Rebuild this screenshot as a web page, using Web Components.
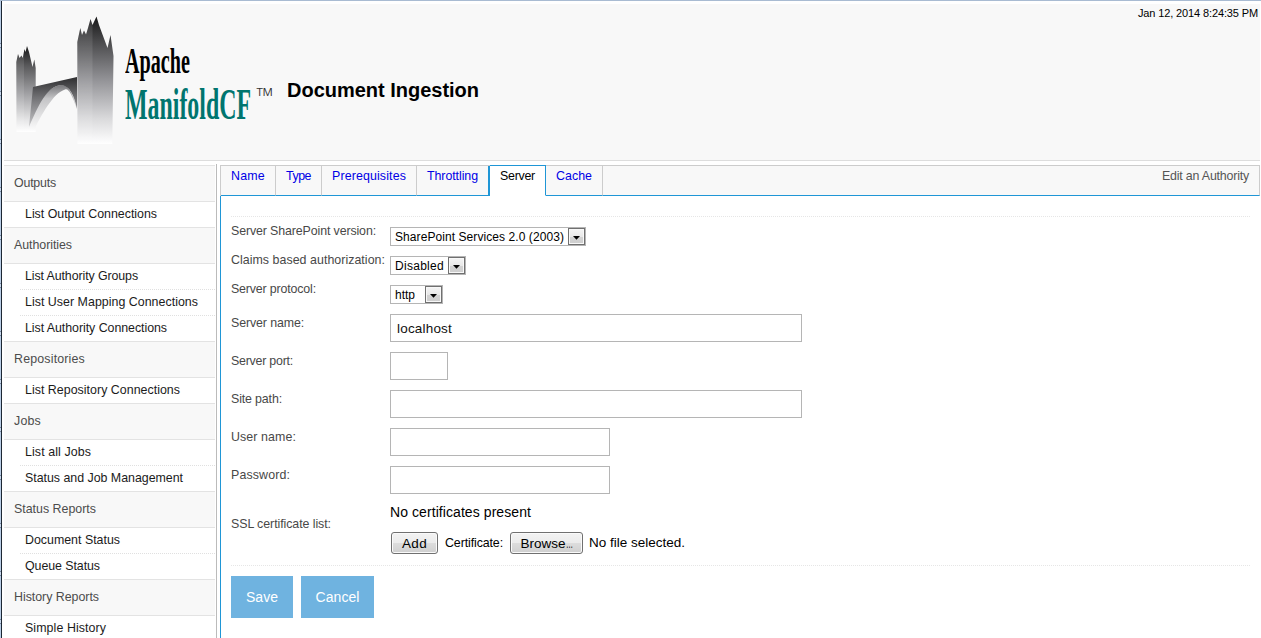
<!DOCTYPE html>
<html lang="en">
<head>
<meta charset="utf-8">
<title>Document Ingestion</title>
<style>
html, body { margin: 0; height: 638px; overflow: hidden; background: #fff; font: 12.4px/14px "Liberation Sans", Arial, sans-serif; }
</style>
</head>
<body>
<mcf-app></mcf-app>
<script>
class McfBase extends HTMLElement {
  constructor() {
    super();
    this.attachShadow({ mode: 'open' }).innerHTML = this.view();
  }
  view() { return '<slot></slot>'; }
}
const define = (name, cls) => customElements.define(name, cls);

/* Single line of text, tracked so that it fills the given advance width. */
define('fit-text', class extends McfBase {
  view() { return '<style>:host{display:inline-block;white-space:nowrap;flex:none}</style><span><slot></slot></span>'; }
  connectedCallback() {
    const w = parseFloat(this.getAttribute('w'));
    const s = this.shadowRoot.querySelector('span');
    s.style.letterSpacing = '0';
    const natural = s.getBoundingClientRect().width;
    s.style.letterSpacing = ((w - natural) / this.textContent.length) + 'px';
    this.style.width = w + 'px';
  }
});

/* Single line of text, condensed horizontally to the given width. */
define('condensed-text', class extends McfBase {
  view() { return '<style>:host{display:block;white-space:nowrap}span{display:inline-block;transform-origin:0 0}</style><span><slot></slot></span>'; }
  connectedCallback() {
    const w = parseFloat(this.getAttribute('w'));
    const s = this.shadowRoot.querySelector('span');
    s.style.transform = `scaleX(${w / s.getBoundingClientRect().width})`;
    this.style.width = w + 'px';
  }
});

define('mcf-logo', class extends McfBase {
  view() { return `<style>
    :host{display:flex;width:276px;height:156px;font-family:"Liberation Serif","Times New Roman",serif;font-weight:bold}
    svg{display:block;flex:none}
    .names{padding:38px 0 0 5px;width:131px;box-sizing:border-box;flex:none}
    .one{font-size:35px;line-height:40px;color:#000}
    .two{font-size:44px;line-height:46px;color:#00756f}
    .tm{font:11.5px/14px "Open Sans",sans-serif;color:#333;margin:81px 0 0 5.500px}
  </style>
  <svg width="116" height="156" viewBox="4 4 116 156">
    <defs>
      <linearGradient id="a" gradientUnits="userSpaceOnUse" x1="0" y1="47" x2="0" y2="132">
        <stop offset="0" stop-color="#1c1c1d"/><stop offset=".22" stop-color="#59595b"/><stop offset=".55" stop-color="#a1a1a4"/><stop offset=".86" stop-color="#e6e6e7"/><stop offset="1" stop-color="#fff"/>
      </linearGradient>
      <linearGradient id="b" gradientUnits="userSpaceOnUse" x1="0" y1="16" x2="0" y2="144">
        <stop offset="0" stop-color="#161617"/><stop offset=".2" stop-color="#4a4a4c"/><stop offset=".5" stop-color="#939397"/><stop offset=".8" stop-color="#d9d9db"/><stop offset="1" stop-color="#fff"/>
      </linearGradient>
      <linearGradient id="c" gradientUnits="userSpaceOnUse" x1="0" y1="78" x2="0" y2="126">
        <stop offset="0" stop-color="#303032"/><stop offset=".4" stop-color="#707073"/><stop offset="1" stop-color="#c4c4c6"/>
      </linearGradient>
      <linearGradient id="d" gradientUnits="userSpaceOnUse" x1="0" y1="85" x2="0" y2="130">
        <stop offset="0" stop-color="#77777a"/><stop offset=".3" stop-color="#c4c4c6"/><stop offset="1" stop-color="#fafafa"/>
      </linearGradient>
    </defs>
    <path fill="url(#a)" d="M16.500 132L16.300 62L18 54L19.500 58L21.500 55.500L22.700 58L24.500 49L25.500 52L27 46L29 52L32.500 67L34.300 59.500L35.700 68V132Z"/>
    <path fill="#fff" opacity=".1" d="M16.300 62L18 54L19.500 58L21.500 55.500L22.700 58L24 52V132H16.500Z"/>
    <path fill="url(#d)" d="M29 127C36 108 45 87 61 85C70 85 74 97 77 109C72 96 69 88 65 89.500C53 93 41 116 34 130Z"/>
    <path fill="url(#c)" d="M33 87L77 77V109C74 95 70 86 61 85C47 86 38 106 29 127Z"/>
    <path fill="url(#b)" d="M77.500 144L77.300 42L80.300 28L82 35L84 30.500L86 34.500L88 28L90.500 19L92.500 25L96.500 16.500L99 25L107.500 48L110.500 35L113.500 56L112.300 144Z"/>
    <path fill="#fff" opacity=".1" d="M77.300 42L80.300 28L82 35L84 30.500L86 34.500L88 28L90.500 19L92.500 25V144H77.500Z"/>
  </svg>
  <div class="names"><condensed-text class="one" w="65">Apache</condensed-text><condensed-text class="two" w="126">ManifoldCF</condensed-text></div>
  <div class="tm"><fit-text w="16">TM</fit-text></div>`; }
});

define('mcf-header', class extends McfBase {
  view() { return `<style>
    :host{display:flex;box-sizing:border-box;height:157px;width:1256px;background:#f8f8f8;border-bottom:1px solid #ddd;align-items:flex-start}
    h1{margin:74px auto 0 7px;font:bold 20px/24px "Liberation Sans",Arial,sans-serif;color:#000}
    .date{font-size:11px;line-height:13px;margin:3px 2px 0 0;color:#000}
  </style>
  <mcf-logo></mcf-logo><h1><fit-text w="192">Document Ingestion</fit-text></h1>
  <div class="date"><fit-text w="120">Jan 12, 2014 8:24:35 PM</fit-text></div>`; }
});

define('nav-group', class extends McfBase {
  view() { return `<style>
    :host{display:block;border-top:1px solid #e3e3e3}
    .h{height:35px;line-height:35px;padding-left:10px;background:#f8f8f8;border-bottom:1px solid #e3e3e3;color:#4c4c4c}
    </style><div class="h"><slot name="title"></slot></div><slot></slot>`; }
});
define('nav-item', class extends McfBase {
  view() { return `<style>
    :host{display:block;height:25px;line-height:25px;margin-left:16px;padding-left:5px;color:#1b1b1b}
    :host(:not(.first)){border-top:1px dotted #e0e0e0}
    </style><slot></slot>`; }
});
const NAV = [
  ['Outputs', 42, [['List Output Connections', 132]]],
  ['Authorities', 58, [['List Authority Groups', 113], ['List User Mapping Connections', 173], ['List Authority Connections', 142]]],
  ['Repositories', 71, [['List Repository Connections', 155]]],
  ['Jobs', 27, [['List all Jobs', 66], ['Status and Job Management', 158]]],
  ['Status Reports', 82, [['Document Status', 95], ['Queue Status', 75]]],
  ['History Reports', 85, [['Simple History', 81]]]
];
define('mcf-nav', class extends McfBase {
  view() { return `<style>:host{display:block;width:212px;padding-top:1px;height:473px;overflow:hidden;border-right:1px solid #bbb}nav{width:211px}</style><nav>` +
    NAV.map(([t, w, items]) => `<nav-group><fit-text slot="title" w="${w}">${t}</fit-text>` +
      items.map(([n, x], i) => `<nav-item class="${i ? '' : 'first'}"><fit-text w="${x}">${n}</fit-text></nav-item>`).join('') + '</nav-group>').join('') + '</nav>'; }
});

define('mcf-tab', class extends McfBase {
  view() { return `<style>
    :host{display:block;box-sizing:border-box;height:30px;padding:3px 10px 0;border-right:1px solid #ccc;border-bottom:1px solid #1f96d6;color:#0000e6}
    :host([before]){border-right:2px solid #1f96d6}
    :host([active]){background:#fff;color:#000;border-right-color:#1f96d6;border-bottom-color:#fff}
    :host([rest]){flex:1;text-align:right;color:#555}
  </style><slot></slot>`; }
});
define('mcf-tabs', class extends McfBase {
  view() { return `<style>:host{display:flex;width:1039px;background:#f8f8f8;border-top:1px solid #ccc;border-left:1px solid #ccc}mcf-tab[active]{box-shadow:0 -1px #1f96d6}</style>
  <mcf-tab><fit-text w="34">Name</fit-text></mcf-tab><mcf-tab><fit-text w="25">Type</fit-text></mcf-tab><mcf-tab><fit-text w="74">Prerequisites</fit-text></mcf-tab><mcf-tab before><fit-text w="51">Throttling</fit-text></mcf-tab><mcf-tab active><fit-text w="35">Server</fit-text></mcf-tab><mcf-tab><fit-text w="36">Cache</fit-text></mcf-tab><mcf-tab rest><fit-text w="87">Edit an Authority</fit-text></mcf-tab>`; }
});

define('form-row', class extends McfBase {
  view() { return `<style>
    :host{display:grid;grid-template-columns:159px 1fr;height:var(--h,38px);box-sizing:border-box}
    .l{padding-top:var(--l,7px);color:#484848}.c{padding-top:5px}
  </style><div class="l"><slot name="label"></slot></div><div class="c"><slot></slot></div>`; }
});
define('form-select', class extends McfBase {
  view() { return `<style>
    :host{display:flex;box-sizing:border-box;height:19px;border:1px solid #b5b5b5;padding-left:4px;font-size:12px;line-height:18px;color:#000;justify-content:space-between;background:#fff}
    i{width:17px;height:17px;box-sizing:border-box;border:1px solid #707070;background:linear-gradient(#f4f4f4,#e8e8e8 50%,#d2d2d2 51%,#cfcfcf);box-shadow:inset 0 0 0 1px #f8f8f8}
    svg{display:block}
  </style><slot></slot><i><svg width="15" height="15"><path d="M4 7h7L7.500 10.800Z"/></svg></i>`; }
  connectedCallback() { this.style.width = this.getAttribute('w') + 'px'; }
});
define('form-input', class extends McfBase {
  view() { return `<style>:host{display:block;box-sizing:border-box;height:28px;border:1px solid #b5b5b5;padding-left:6px;font-size:13.500px;line-height:27px;color:#111;background:#fff}</style><slot></slot>`; }
  connectedCallback() { this.style.width = this.getAttribute('w') + 'px'; }
});
define('native-button', class extends McfBase {
  view() { return `<style>:host{display:block;box-sizing:border-box;height:22px;border:1px solid #707070;border-radius:3px;text-align:center;font-size:13.500px;line-height:21px;color:#000;background:linear-gradient(#f3f3f3,#ebebeb 49%,#dddddd 50%,#cfcfcf);box-shadow:inset 0 0 0 1px #fafafa}.r{display:flex;justify-content:center}</style><div class="r"><slot></slot></div>`; }
  connectedCallback() { this.style.width = this.getAttribute('w') + 'px'; }
});
define('action-button', class extends McfBase {
  view() { return `<style>:host{display:flex;justify-content:center;height:42px;font-size:14px;line-height:43px;color:#fff;background:#6fb3e0}</style><slot></slot>`; }
  connectedCallback() { this.style.width = this.getAttribute('w') + 'px'; }
});
/* The trailing ellipsis of the file button is set narrower than the font's own. */
define('short-ellipsis', class extends McfBase {
  view() { return `<style>:host{display:block;width:7px}</style><condensed-text w="7"><slot></slot></condensed-text>`; }
});

define('mcf-form', class extends McfBase {
  view() { return `<style>
    :host{display:block;box-sizing:border-box;width:1040px;height:442px;border-left:1px solid #1f96d6;padding:20px 10px 0}
    .f{border-top:1px dotted #e6e6e6;border-bottom:1px dotted #e6e6e6;padding-top:5px}
    .s{--h:29px;--l:2px}.ssl{--h:66px;--l:18px}
    .n{font-size:14px;line-height:16px;color:#000}
    .b{display:flex;align-items:center;margin:12px 0 0 1px;color:#000}
    .a{display:flex;gap:8px;padding-top:10px}
  </style>
  <div class="f">
    <form-row class="s"><fit-text slot="label" w="145">Server SharePoint version:</fit-text><form-select w="196"><fit-text w="169">SharePoint Services 2.0 (2003)</fit-text></form-select></form-row>
    <form-row class="s"><fit-text slot="label" w="154">Claims based authorization:</fit-text><form-select w="76"><fit-text w="49">Disabled</fit-text></form-select></form-row>
    <form-row class="s"><fit-text slot="label" w="85">Server protocol:</fit-text><form-select w="53"><fit-text w="20">http</fit-text></form-select></form-row>
    <form-row><fit-text slot="label" w="73">Server name:</fit-text><form-input w="412"><fit-text w="55">localhost</fit-text></form-input></form-row>
    <form-row><fit-text slot="label" w="62">Server port:</fit-text><form-input w="58"></form-input></form-row>
    <form-row><fit-text slot="label" w="51">Site path:</fit-text><form-input w="412"></form-input></form-row>
    <form-row><fit-text slot="label" w="65">User name:</fit-text><form-input w="220"></form-input></form-row>
    <form-row><fit-text slot="label" w="59">Password:</fit-text><form-input w="220"></form-input></form-row>
    <form-row class="ssl"><fit-text slot="label" w="100">SSL certificate list:</fit-text>
      <div class="n"><fit-text w="141">No certificates present</fit-text></div>
      <div class="b"><native-button w="47"><fit-text w="25">Add</fit-text></native-button><fit-text w="58" style="margin:0 7px">Certificate:</fit-text><native-button w="73"><fit-text w="45">Browse</fit-text><short-ellipsis>…</short-ellipsis></native-button><fit-text w="96" style="margin-left:6px;font-size:13.500px;line-height:16px">No file selected.</fit-text></div>
    </form-row>
  </div>
  <div class="a"><action-button w="62"><fit-text w="32">Save</fit-text></action-button><action-button w="73"><fit-text w="44">Cancel</fit-text></action-button></div>`; }
});

define('mcf-app', class extends McfBase {
  view() { return `<style>
    :host{display:block;box-sizing:border-box;width:1261px;height:638px;overflow:hidden;border-top:1px solid #a9bbd2;padding-left:1px;background:repeating-linear-gradient(#b9cde6 0 42px,#7d8ca3 42px 43px,#c9d9ee 43px 46px,#7d8ca3 46px 47px,#b9cde6 47px 48px)}
    .w{border-left:1px solid #1c2733;padding:3px 0 0 2px;height:634px;background:#fff}
    .m{display:flex;gap:3px;padding-top:3px}
    main{padding-top:1px}
  </style><div class="w"><mcf-header></mcf-header><div class="m"><mcf-nav></mcf-nav><main><mcf-tabs></mcf-tabs><mcf-form></mcf-form></main></div></div>`; }
});
</script>
</body>
</html>
